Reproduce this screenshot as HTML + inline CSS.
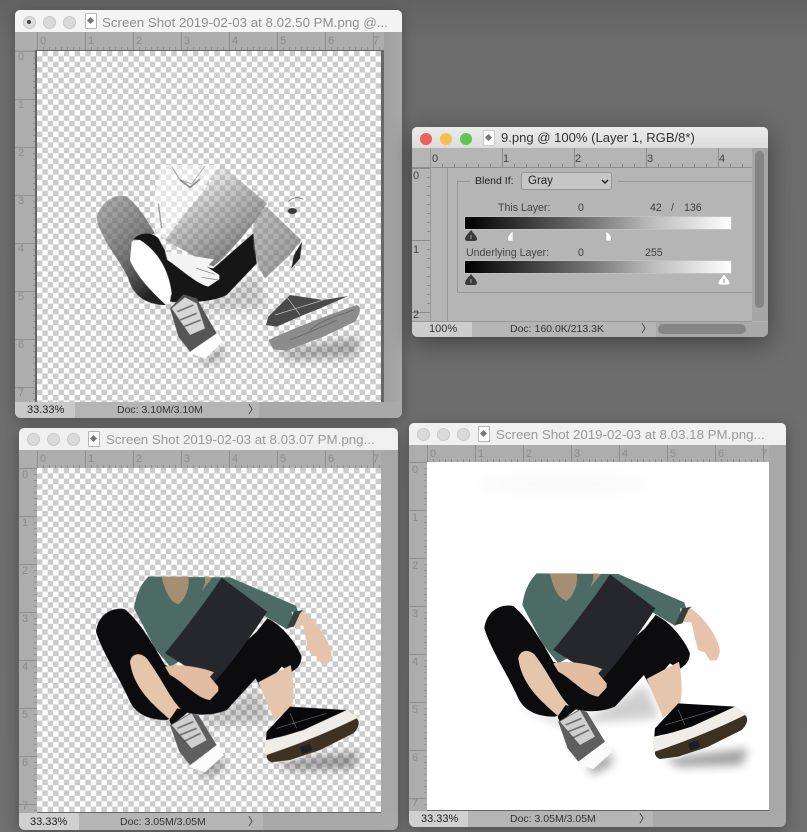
<!DOCTYPE html>
<html><head><meta charset="utf-8">
<style>
html,body{margin:0;padding:0}
body{width:807px;height:832px;overflow:hidden;background:#6c6c6c;position:relative;font-family:"Liberation Sans",sans-serif}
#bg{position:absolute;inset:0;background:linear-gradient(180deg,#626262 0,#6c6c6c 40px,#6f6f6f 100%)}
#all{position:absolute;inset:0;filter:blur(.35px)}
.win{position:absolute;background:#a6a6a6;border-radius:5px 5px 6px 6px;overflow:hidden;box-shadow:0 3px 14px rgba(0,0,0,.28)}
.title{position:absolute;left:0;right:0;top:0;height:22px;background:#f3f3f3;border-bottom:0}
.dot{position:absolute;width:11px;height:11px;border-radius:50%;background:#dadada;border:.5px solid #c8c8c8;top:5px}
.t{position:absolute;white-space:nowrap;top:3.5px;font-size:13.32px;color:#8f8f8f;line-height:16px}
.doc{position:absolute;top:3px;width:10px;height:14px;background:#fff;border:1px solid #b5b5b5;border-radius:1px}
.doc:after{content:"";position:absolute;left:2px;top:4px;width:5px;height:5px;background:#777;transform:rotate(45deg)}
.rt{position:absolute;background-color:#adadad;background-image:repeating-linear-gradient(90deg,#8f8f8f 0 1px,transparent 1px 48px),repeating-linear-gradient(90deg,#8f8f8f 0 1px,transparent 1px 6px);background-size:auto,100% 3px;background-repeat:repeat,repeat-x;background-position:0 0,0 100%}
.rl{position:absolute;background-color:#adadad;background-image:repeating-linear-gradient(180deg,#8f8f8f 0 1px,transparent 1px 48px),repeating-linear-gradient(180deg,#8f8f8f 0 1px,transparent 1px 6px);background-size:auto,3px 100%;background-repeat:repeat,repeat-y;background-position:0 0,100% 0}
.corner{position:absolute;background:#adadad}
.n{position:absolute;font-size:11px;line-height:11px;color:#8b8b8b}
.canvas{position:absolute;background-color:#fff;background-image:conic-gradient(#cbcbcb 0 25%,#fff 0 50%,#cbcbcb 0 75%,#fff 0);background-size:10.75px 10.75px}
.st{position:absolute;left:0;right:0;height:16px;background:#a9a9a9}
.st i{position:absolute;top:0;height:100%;display:block}
.s{position:absolute;font-size:10.5px;line-height:14px;color:#333;white-space:nowrap;top:1px}
.abs{position:absolute}
.l{position:absolute;font-size:10.6px;line-height:12px;color:#3d3d3d;white-space:nowrap}
.grad{position:absolute;left:465px;width:266px;height:12px;background:linear-gradient(90deg,#000,#777 48%,#bbb 70%,#fff);box-shadow:0 0 0 1px #c0c0c0}
svg.fig{position:absolute;left:0;top:0}
</style></head><body>
<div id="bg"></div>
<div id="all">

<!-- window 1 -->
<div class="win" style="left:15px;top:10px;width:387px;height:408px">
  <div class="title" style="background:#f4f4f4"></div>
  <div class="dot" style="left:8px;top:6px;background:#dcdcdc"></div><div class="abs" style="left:12px;top:10px;width:4px;height:4px;border-radius:50%;background:#444"></div>
  <div class="dot" style="left:28px;top:6px"></div><div class="dot" style="left:48px;top:6px"></div>
  <div class="doc" style="left:70px;top:3px"></div>
  <div class="t" style="left:87px;top:5px">Screen Shot 2019-02-03 at 8.02.50 PM.png @...</div>
  <div class="corner" style="left:0;top:22px;width:22px;height:18px"></div>
  <div class="rt" style="left:22px;top:22px;width:348px;height:18px"></div>
  <div class="rl" style="left:0;top:41px;width:21px;height:351px"></div>
  <div class="abs" style="left:21px;top:40px;width:349px;height:1px;background:#666"></div>
  <div class="abs" style="left:366px;top:40px;width:3px;height:352px;background:#666"></div>
  <div class="abs" style="left:20px;top:40px;width:2px;height:352px;background:#666"></div>
  <div class="canvas" style="left:22px;top:41px;width:344px;height:351px"></div>
  <div class="abs" style="left:369px;top:22px;width:18px;height:370px;background:linear-gradient(90deg,#a0a0a0,#a8a8a8)"></div>
  <span class="n" style="left:25px;top:26px">0</span><span class="n" style="left:73px;top:26px">1</span><span class="n" style="left:121px;top:26px">2</span><span class="n" style="left:169px;top:26px">3</span><span class="n" style="left:217px;top:26px">4</span><span class="n" style="left:265px;top:26px">5</span><span class="n" style="left:313px;top:26px">6</span><span class="n" style="left:358px;top:26px">7</span>
  <span class="n" style="left:3px;top:42px">0</span><span class="n" style="left:3px;top:90px">1</span><span class="n" style="left:3px;top:138px">2</span><span class="n" style="left:3px;top:186px">3</span><span class="n" style="left:3px;top:234px">4</span><span class="n" style="left:3px;top:282px">5</span><span class="n" style="left:3px;top:330px">6</span><span class="n" style="left:3px;top:378px">7</span>
  <div class="st" style="top:392px"><i style="left:0;width:60px;background:#c9c9c9"></i><i style="left:60px;width:184px;background:#b5b5b5"></i></div>
  <div class="s" style="left:12px;top:393px;font-size:11px;color:#222">33.33%</div>
  <div class="s" style="left:102px;top:393px;font-size:10.5px">Doc: 3.10M/3.10M</div>
  <div class="s" style="left:233px;top:393px;font-size:11px">〉</div>
</div>

<!-- window 3 -->
<div class="win" style="left:19px;top:428px;width:379px;height:402px">
  <div class="title" style="background:#f0f0f0"></div>
  <div class="dot" style="left:8px;top:5px"></div><div class="dot" style="left:28px;top:5px"></div><div class="dot" style="left:48px;top:5px"></div>
  <div class="doc" style="left:69px;top:3px"></div>
  <div class="t" style="left:87px;top:4px;color:#999">Screen Shot 2019-02-03 at 8.03.07 PM.png...</div>
  <div class="corner" style="left:0;top:22px;width:18px;height:18px"></div>
  <div class="rt" style="left:18px;top:22px;width:344px;height:18px"></div>
  <div class="rl" style="left:0;top:40px;width:18px;height:345px"></div>
  <div class="canvas" style="left:18px;top:40px;width:344px;height:345px"></div>
  <div class="abs" style="left:18px;top:384px;width:344px;height:1px;background:#666"></div>
  <div class="abs" style="left:362px;top:22px;width:17px;height:363px;background:#a8a8a8"></div>
  <span class="n" style="left:21px;top:26px">0</span><span class="n" style="left:69px;top:26px">1</span><span class="n" style="left:117px;top:26px">2</span><span class="n" style="left:165px;top:26px">3</span><span class="n" style="left:213px;top:26px">4</span><span class="n" style="left:261px;top:26px">5</span><span class="n" style="left:309px;top:26px">6</span><span class="n" style="left:354px;top:26px">7</span>
  <span class="n" style="left:3px;top:42px">0</span><span class="n" style="left:3px;top:90px">1</span><span class="n" style="left:3px;top:138px">2</span><span class="n" style="left:3px;top:186px">3</span><span class="n" style="left:3px;top:234px">4</span><span class="n" style="left:3px;top:282px">5</span><span class="n" style="left:3px;top:330px">6</span><span class="n" style="left:3px;top:373px">7</span>
  <div class="st" style="top:385px;height:17px"><i style="left:0;width:60px;background:#d0d0d0"></i><i style="left:60px;width:184px;background:#b5b5b5"></i></div>
  <div class="s" style="left:11px;top:387px;font-size:11px;color:#222">33.33%</div>
  <div class="s" style="left:101px;top:387px;font-size:10.5px">Doc: 3.05M/3.05M</div>
  <div class="s" style="left:229px;top:387px;font-size:11px">〉</div>
</div>

<!-- window 4 -->
<div class="win" style="left:409px;top:423px;width:377px;height:404px">
  <div class="title" style="background:#f0f0f0"></div>
  <div class="dot" style="left:8px;top:5px"></div><div class="dot" style="left:28px;top:5px"></div><div class="dot" style="left:48px;top:5px"></div>
  <div class="doc" style="left:69px;top:3px"></div>
  <div class="t" style="left:87px;top:4px;color:#999">Screen Shot 2019-02-03 at 8.03.18 PM.png...</div>
  <div class="corner" style="left:0;top:22px;width:18px;height:18px"></div>
  <div class="rt" style="left:18px;top:22px;width:342px;height:17px"></div>
  <div class="rl" style="left:0;top:39px;width:18px;height:348px"></div>
  <div class="abs" style="left:18px;top:39px;width:342px;height:348px;background:#fff"></div>
  <div class="abs" style="left:18px;top:387px;width:342px;height:1px;background:#666"></div>
  <div class="abs" style="left:360px;top:22px;width:17px;height:366px;background:#a8a8a8"></div>
  <span class="n" style="left:21px;top:26px">0</span><span class="n" style="left:69px;top:26px">1</span><span class="n" style="left:117px;top:26px">2</span><span class="n" style="left:165px;top:26px">3</span><span class="n" style="left:213px;top:26px">4</span><span class="n" style="left:261px;top:26px">5</span><span class="n" style="left:309px;top:26px">6</span><span class="n" style="left:352px;top:26px">7</span>
  <span class="n" style="left:3px;top:42px">0</span><span class="n" style="left:3px;top:90px">1</span><span class="n" style="left:3px;top:138px">2</span><span class="n" style="left:3px;top:186px">3</span><span class="n" style="left:3px;top:234px">4</span><span class="n" style="left:3px;top:282px">5</span><span class="n" style="left:3px;top:330px">6</span><span class="n" style="left:3px;top:375px">7</span>
  <div class="st" style="top:388px;height:16px"><i style="left:0;width:59px;background:#d0d0d0"></i><i style="left:59px;width:185px;background:#b5b5b5"></i></div>
  <div class="s" style="left:12px;top:389px;font-size:11px;color:#222">33.33%</div>
  <div class="s" style="left:101px;top:389px;font-size:10.5px">Doc: 3.05M/3.05M</div>
  <div class="s" style="left:230px;top:389px;font-size:11px">〉</div>
</div>

<!-- window 2 -->
<div class="win" style="left:412px;top:127px;width:356px;height:210px;background:#b5b5b5;box-shadow:0 6px 26px rgba(0,0,0,.42)">
  <div class="title" style="height:21px;background:linear-gradient(#ececec,#dcdcdc)"></div>
  <div class="abs" style="left:8px;top:6px;width:12px;height:12px;border-radius:50%;background:#ee5f5b"></div>
  <div class="abs" style="left:28px;top:6px;width:12px;height:12px;border-radius:50%;background:#f6bd4f"></div>
  <div class="abs" style="left:48px;top:6px;width:12px;height:12px;border-radius:50%;background:#61c554"></div>
  <div class="doc" style="left:71px;top:3px;background:#fff;border-color:#ccc"></div>
  <div class="t" style="left:89px;top:3px;color:#333;font-size:13.05px">9.png @ 100% (Layer 1, RGB/8*)</div>
  <div class="corner" style="left:0;top:21px;width:18px;height:19px;background:#b5b5b5"></div>
  <div class="rt" style="left:18px;top:21px;width:322px;height:19px;background-color:#b5b5b5;background-image:repeating-linear-gradient(90deg,#8a8a8a 0 1px,transparent 1px 72px),repeating-linear-gradient(90deg,#8a8a8a 0 1px,transparent 1px 12px)"></div>
  <div class="abs" style="left:0;top:40px;width:340px;height:1px;background:#8f8f8f"></div>
  <div class="rl" style="left:0;top:41px;width:18px;height:153px;background-color:#b5b5b5;background-image:repeating-linear-gradient(180deg,#8a8a8a 0 1px,transparent 1px 72px),repeating-linear-gradient(180deg,#8a8a8a 0 1px,transparent 1px 9px)"></div>
  <div class="abs" style="left:18px;top:21px;width:1px;height:173px;background:#999"></div>
  <div class="abs" style="left:35px;top:41px;width:1px;height:153px;background:#999"></div>
  <div class="abs" style="left:340px;top:21px;width:16px;height:173px;background:#a6a6a6"></div>
  <div class="abs" style="left:343px;top:24px;width:9px;height:157px;border-radius:5px;background:#858585"></div>
  <span class="n" style="left:20px;top:27px;color:#444">0</span><span class="n" style="left:91px;top:27px;color:#444">1</span><span class="n" style="left:163px;top:27px;color:#444">2</span><span class="n" style="left:235px;top:27px;color:#444">3</span><span class="n" style="left:307px;top:27px;color:#444">4</span>
  <span class="n" style="left:1px;top:44px;color:#444">0</span><span class="n" style="left:1px;top:118px;color:#444">1</span><span class="n" style="left:1px;top:183px;color:#444">2</span>
  <div class="abs" style="left:0;top:194px;width:340px;height:1px;background:#999"></div>
  <div class="st" style="top:195px;height:15px;background:#a9a9a9"><i style="left:0;width:60px;background:#cdcdcd"></i><i style="left:60px;width:184px;background:#b5b5b5"></i></div>
  <div class="abs" style="left:246px;top:197px;width:88px;height:10px;border-radius:5px;background:#858585"></div>
  <div class="s" style="left:17px;top:195px;font-size:11px">100%</div>
  <div class="s" style="left:98px;top:195px;font-size:10.5px">Doc: 160.0K/213.3K</div>
  <div class="s" style="left:229px;top:195px;font-size:11px">〉</div>
</div>
<div class="abs" style="left:457px;top:181px;width:295px;height:112px;border:1px solid #969696;border-right:0;box-sizing:border-box"></div>
<div class="abs" style="left:470px;top:175px;width:51px;height:14px;background:#b5b5b5"></div>
<div class="abs" style="left:612px;top:175px;width:6px;height:14px;background:#b5b5b5"></div>
<div class="l" style="left:475px;top:175px;font-size:10.5px;color:#222">Blend If:</div>
<div class="abs" style="left:521px;top:172px;width:91px;height:18px;box-sizing:border-box;background:#c6c6c6;border:1px solid #959595;border-radius:3px"></div>
<div class="l" style="left:528px;top:175px;font-size:11.5px;color:#222">Gray</div>
<svg class="abs" style="left:601px;top:179px" width="9" height="6"><path d="M1 1 L4 4 L7 1" fill="none" stroke="#222" stroke-width="1.4"/></svg>
<div class="l" style="left:498px;top:202px;color:#444">This Layer:</div>
<div class="l" style="left:578px;top:202px">0</div>
<div class="l" style="left:650px;top:202px">42</div><div class="l" style="left:671px;top:202px">/</div><div class="l" style="left:684px;top:202px">136</div>
<div class="grad" style="top:217px"></div>
<div class="l" style="left:466px;top:247px;color:#444">Underlying Layer:</div>
<div class="l" style="left:578px;top:247px">0</div>
<div class="l" style="left:645px;top:247px">255</div>
<div class="grad" style="top:261px"></div>
<svg class="abs" style="left:0;top:0;pointer-events:none" width="807" height="832">
  <path d="M471 230 C473 233 477 236 477 239 Q477 241 474 241 L468 241 Q465 241 465 239 C465 236 469 233 471 230Z" fill="#3a3a3a"/>
  <path d="M471 274 C473 277 477 280 477 283 Q477 285 474 285 L468 285 Q465 285 465 283 C465 280 469 277 471 274Z" fill="#3a3a3a"/>
  <path d="M513 231 L513 241 L508 241 Q506 236 513 231Z" fill="#fff" stroke="#a5a5a5" stroke-width=".6"/>
  <path d="M606 231 L606 241 L611 241 Q613 236 606 231Z" fill="#fff" stroke="#a5a5a5" stroke-width=".6"/>
  <path d="M724 274 C726 277 730 280 730 283 Q730 285 727 285 L721 285 Q718 285 718 283 C718 280 722 277 724 274Z" fill="#fff" stroke="#a5a5a5" stroke-width=".6"/>
  <path d="M471 235v4M471 279v4" stroke="#aaa" stroke-width="1"/>
  <path d="M724 279v4" stroke="#999" stroke-width="1"/>
</svg>

<!-- figures -->
<svg class="fig" width="807" height="832" viewBox="0 0 807 832">
<defs>
  <filter id="b1" x="-40%" y="-60%" width="180%" height="220%"><feGaussianBlur stdDeviation="14"/></filter>
  <filter id="hz" x="-40%" y="-100%" width="180%" height="300%"><feGaussianBlur stdDeviation="8"/></filter>
  <linearGradient id="bookg" x1="0" y1="0" x2=".7" y2="1"><stop offset="0" stop-color="#fff" stop-opacity=".1"/><stop offset=".5" stop-color="#888" stop-opacity=".5"/><stop offset="1" stop-color="#444" stop-opacity=".75"/></linearGradient>
  <linearGradient id="legg" x1="0" y1="0" x2=".6" y2="1"><stop offset="0" stop-color="#777" stop-opacity=".55"/><stop offset=".55" stop-color="#555" stop-opacity=".75"/><stop offset="1" stop-color="#222"/></linearGradient>
  <linearGradient id="flap" x1="0" y1="0" x2="1" y2="1"><stop offset="0" stop-color="#888" stop-opacity=".5"/><stop offset="1" stop-color="#666" stop-opacity=".7"/></linearGradient>
  <g id="person">
    <g fill="#000" opacity=".38" filter="url(#b1)">
      <path d="M110 425 L240 470 L330 470 L500 370 L530 430 L540 470 L240 490Z" opacity=".5"/>
      <path d="M560 590 L810 560 L790 610 L600 615Z"/>
      <path d="M330 610 L400 570 L400 610 L340 640Z"/>
    </g>
    <path d="M175 35 L420 37 L618 122 L632 165 L590 192 L520 150 L240 305 L195 250 L132 130 Q140 70 175 35Z" fill="#4c6b65"/>
    <path d="M215 35 C225 80 240 110 265 118 C290 100 300 60 295 35Z" fill="#a48f72"/>
    <path d="M345 35 L368 37 L335 78 L345 55Z" fill="#a48f72"/>
    <path d="M18 200 C25 145 70 125 105 133 C150 170 190 240 225 300 L350 335 L500 200 L532 160 C575 180 620 235 635 275 C632 305 620 310 604 322 L575 305 L515 375 L497 340 L410 435 C370 452 320 452 290 442 L230 465 C180 465 140 450 120 410 C90 340 40 270 18 200Z" fill="#0c0c0e"/>
    <path d="M120 290 C125 265 150 260 170 280 C215 340 240 400 272 432 L238 462 C190 420 130 370 120 290Z" fill="#e6c6ab"/>
    <path d="M505 352 L602 300 C612 350 612 400 606 425 L555 470 C540 430 520 390 505 352Z" fill="#e5c6ac"/>
    <path d="M395 38 L531 140 C500 190 430 290 370 355 L225 265 C270 210 340 120 395 38Z" fill="#26272c"/>
    <path d="M225 305 C260 295 330 305 372 322 L360 335 L385 365 L385 378 L360 405 C320 400 280 350 240 330Z" fill="#e3bda2"/>
    <path d="M605 140 L640 142 C680 170 722 230 725 270 L716 295 L695 297 L680 272 L660 265 L650 230 L640 182 L610 180Z" fill="#e6c3aa"/>
    <path d="M590 190 L612 140 L640 135 L630 145 L612 185Z" fill="#33413f"/>
    <path d="M238 465 L262 430 L296 440 L245 482Z" fill="#0b0b0b"/>
    <path d="M380 535 L402 570 L345 622 L295 605 L345 570Z" fill="#fbfbfb"/>
    <path d="M240 480 L300 445 L325 450 L380 540 L300 600 L268 560Z" fill="#5f5f5f"/>
    <path d="M245 480 L305 445 L350 525 L305 550Z" fill="#cfcfcf"/>
    <path d="M262 490 L310 470M270 510 L320 490M280 530 L332 505" stroke="#333" stroke-width="5" opacity=".6"/>
    <path d="M548 475 L580 445 L590 455 L560 485Z" fill="#f6f6f6"/>
    <path d="M528 525 L530 500 L600 425 L770 435 L800 455 L640 500Z" fill="#08080a"/>
    <path d="M600 445 L620 490M560 490 L710 445" stroke="#8a8a8a" stroke-width="1.5" fill="none"/>
    <path d="M525 530 L640 495 L770 435 L810 460 L805 490 L700 550 L600 590 L540 592 L525 565Z" fill="#f0ede8"/>
    <path d="M530 570 C590 550 700 510 800 460 C812 470 806 490 790 505 L690 555 L600 585 L545 592Q528 585 530 570Z" fill="#3d3122"/>
    <rect x="632" y="540" width="32" height="22" fill="#1e1e22" transform="rotate(-20 648 551)"/>
  </g>
</defs>
<use href="#person" transform="translate(90 565) scale(.3333)"/>
<use href="#person" transform="translate(478.3 561.7) scale(.3333)"/>
<ellipse cx="565" cy="484" rx="90" ry="12" fill="#000" opacity=".018" filter="url(#hz)"/>

<!-- top-left tonal figure -->
<g transform="translate(90 160) scale(.3333)">
  <g fill="#000" opacity=".3" filter="url(#b1)">
    <path d="M110 395 L235 445 L320 445 L500 340 L520 400 L530 445 L240 460Z" opacity=".5"/>
    <path d="M560 575 L810 530 L800 590 L600 600Z"/>
    <path d="M330 600 L400 550 L400 590 L340 620Z"/>
  </g>
  <path d="M215 15 L390 15 L225 240 L195 210 L190 120Z" fill="#fff" opacity=".5"/>
  <path d="M205 130 L215 205" stroke="#666" stroke-width="4" fill="none" opacity=".6"/>
  <path d="M245 20 L270 60 L305 72 L345 18" stroke="#777" stroke-width="3" fill="none" opacity=".6"/>
  <path d="M270 60 L300 82 L330 58" stroke="#333" stroke-width="5" fill="none" opacity=".5"/>
  <path d="M395 15 L531 130 C500 180 430 270 370 320 L225 240 C270 180 340 100 395 15Z" fill="url(#bookg)"/>
  <path d="M20 180 C25 130 70 100 110 110 C150 140 175 190 195 220 L130 240 L120 300 C140 350 190 400 228 435 C180 435 130 415 115 355 C90 300 40 250 20 180Z" fill="url(#legg)"/>
  <path d="M120 300 L125 245 L150 240 C215 280 240 350 245 400 L228 435 C190 400 140 350 120 300Z" fill="#fff"/>
  <path d="M130 238 C150 215 185 215 205 235 L240 300 L370 325 L490 220 L500 310 L410 405 C370 425 300 430 240 425 L245 400 C240 350 215 280 150 240Z" fill="#161616"/>
  <path d="M225 275 L260 280 L372 298 L350 320 L388 345 L388 358 L355 380 C320 372 270 325 232 300Z" fill="#f4f4f4"/>
  <path d="M320 325 L375 343M335 352 L385 360" stroke="#777" stroke-width="2"/>
  <path d="M490 180 L530 140 L634 240 L600 285 L525 355 L505 320 L490 260Z" fill="url(#flap)"/>
  <path d="M604 325 L612 285 L636 245 L630 295Z" fill="#222"/>
  <path d="M595 125 Q615 105 640 118" stroke="#666" stroke-width="2" fill="none"/>
  <ellipse cx="607" cy="153" rx="14" ry="9" fill="#3a3a3a"/>
  <path d="M380 515 L398 545 L345 597 L300 578Z" fill="#fff"/>
  <path d="M240 445 L280 403 L320 415 L380 520 L300 575 L265 530Z" fill="#555"/>
  <path d="M245 445 L285 412 L320 430 L345 505 L300 525Z" fill="#d6d6d6"/>
  <path d="M262 455 L310 435M270 480 L320 460M282 500 L332 480" stroke="#333" stroke-width="5" opacity=".6"/>
  <path d="M528 495 L535 470 L600 405 L700 420 L775 408 L690 445 L640 465 L560 500Z" fill="#4a4a4a"/>
  <path d="M590 410 L630 465 M555 465 L700 420" stroke="#bbb" stroke-width="2" fill="none"/>
  <path d="M535 540 C600 510 700 470 800 435 C815 440 812 460 795 485 L700 530 L590 572 L550 568Z" fill="#8c8c8c"/>
  <path d="M660 510 C700 475 770 460 790 450M600 540 C650 520 700 500 740 480" stroke="#555" stroke-width="3" fill="none" opacity=".6"/>
</g>
</svg>
</div>
</body></html>
